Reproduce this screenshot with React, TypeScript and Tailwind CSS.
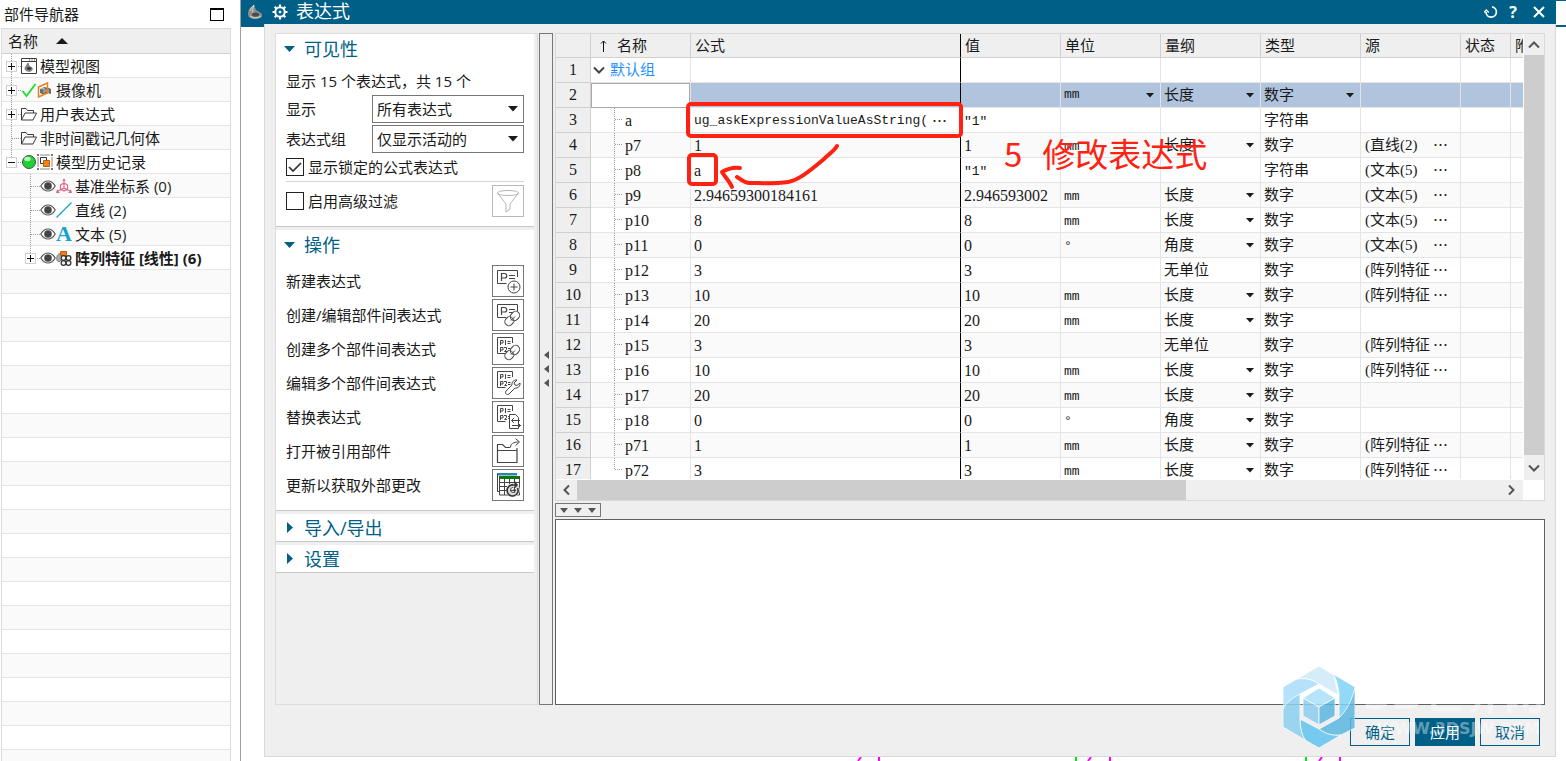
import { useState } from 'react';
import type { ReactNode } from 'react';

interface Expression {
  name: string;
  formula: string;
  value: string;
  unit?: string;
  dimension?: string;
  editable?: boolean;
  type: string;
  source?: string;
}

const expressions: Expression[] = [
  { name: 'a', formula: 'ug_askExpressionValueAsString(', value: '"1"', type: '字符串' },
  { name: 'p7', formula: '1', value: '1', unit: 'mm', dimension: '长度', editable: true, type: '数字', source: '(直线(2)' },
  { name: 'p8', formula: 'a', value: '"1"', type: '字符串', source: '(文本(5)' },
  { name: 'p9', formula: '2.94659300184161', value: '2.946593002', unit: 'mm', dimension: '长度', editable: true, type: '数字', source: '(文本(5)' },
  { name: 'p10', formula: '8', value: '8', unit: 'mm', dimension: '长度', editable: true, type: '数字', source: '(文本(5)' },
  { name: 'p11', formula: '0', value: '0', unit: '°', dimension: '角度', editable: true, type: '数字', source: '(文本(5)' },
  { name: 'p12', formula: '3', value: '3', dimension: '无单位', type: '数字', source: '(阵列特征' },
  { name: 'p13', formula: '10', value: '10', unit: 'mm', dimension: '长度', editable: true, type: '数字', source: '(阵列特征' },
  { name: 'p14', formula: '20', value: '20', unit: 'mm', dimension: '长度', editable: true, type: '数字' },
  { name: 'p15', formula: '3', value: '3', dimension: '无单位', type: '数字', source: '(阵列特征' },
  { name: 'p16', formula: '10', value: '10', unit: 'mm', dimension: '长度', editable: true, type: '数字', source: '(阵列特征' },
  { name: 'p17', formula: '20', value: '20', unit: 'mm', dimension: '长度', editable: true, type: '数字' },
  { name: 'p18', formula: '0', value: '0', unit: '°', dimension: '角度', editable: true, type: '数字' },
  { name: 'p71', formula: '1', value: '1', unit: 'mm', dimension: '长度', editable: true, type: '数字', source: '(阵列特征' },
  { name: 'p72', formula: '3', value: '3', unit: 'mm', dimension: '长度', editable: true, type: '数字', source: '(阵列特征' },
];

/* ---------- icons ---------- */

function PartLogo({ className }: { className: string }) {
  return (
    <svg viewBox="0 0 16 16" className={className}>
      <path d="M1 9C2 4 5 2 7 1l2 5 5 3c2 2 1 4-1 5-4 2-9 1-11-1-1-1-1-3-1-4z" fill="#8d8d8d" />
      <path d="M7 1C6 4 5 7 6 9M3 7c0-2 2-4 4-6" stroke="#d5d5d5" strokeWidth="1" fill="none" />
      <ellipse cx="8.5" cy="10.5" rx="3.6" ry="2" fill="#4c4c4c" />
      <path d="M3 12c3 3 9 2 11 0" stroke="#c4c4c4" strokeWidth="1.2" fill="none" />
    </svg>
  );
}

function ViewsIcon() {
  return (
    <svg viewBox="0 0 16 16" className="h-4 w-4" fill="none" stroke="#3c3c3c">
      <path d="M.5.5h15v15H.5zM.5 3.5h15" />
      <path d="M8 2h1M10.500 2h1M13 2h1" />
      <path d="M4 10l3-5 1 3 3 2c1 2-1 4-4 3-2 0-3-1-3-3z" fill="#8a8a8a" stroke="#777" />
      <ellipse cx="8" cy="10.500" rx="2" ry="1" fill="#333" />
    </svg>
  );
}

function CheckIcon() {
  return (
    <svg viewBox="0 0 16 16" className="h-4 w-4" fill="none">
      <path d="M1.500 9l4 5L14.500 2" stroke="#22dd33" strokeWidth="1.900" />
    </svg>
  );
}

function CameraIcon() {
  return (
    <svg viewBox="0 0 16 16" className="h-4 w-4" fill="none">
      <path d="M3 7l4-2 5 1 2 1v5l-4-1-3 2-4-2z" fill="#6b6b6b" />
      <path d="M4 7l3-1v5M11 7v4" stroke="#c9c9c9" />
      <circle cx="9" cy="8.500" r="1.500" fill="#9a9a9a" />
      <path d="M1.500 5L10.500 1v10l-9 4z" stroke="#e8801e" strokeWidth="1.500" />
    </svg>
  );
}

function FolderIcon() {
  return (
    <svg viewBox="0 0 16 16" className="h-4 w-4" fill="none" stroke="#3c3c3c">
      <path d="M.5 14V2.500h4.500l1.500 2h6v2.500M.5 14L4 7h11.500L12 14z" />
    </svg>
  );
}

function GreenBall() {
  return (
    <svg viewBox="0 0 16 16" className="h-4 w-4">
      <circle cx="8" cy="8" r="6.500" fill="#1fd033" stroke="#3a5a3c" />
      <ellipse cx="6.500" cy="5" rx="3.200" ry="2.200" fill="#b8f7bd" />
    </svg>
  );
}

function HistoryIcon() {
  return (
    <svg viewBox="0 0 16 16" className="h-4 w-4" fill="none" stroke="#6a6a6a">
      <path d="M3 1h10M3 15h10M1 3v10M15 3v10" strokeWidth=".8" />
      <path d="M0 0h2v2H0zM14 0h2v2h-2zM0 14h2v2H0zM14 14h2v2h-2z" fill="#777" stroke="none" />
      <path d="M3.500 3.500h6v6h-6z" fill="#fff" stroke="#333" />
      <path d="M6.500 6.500h6v6h-6z" fill="#ee8413" stroke="#b8600a" />
    </svg>
  );
}

function EyeIcon() {
  return (
    <svg viewBox="0 0 16 16" className="h-4 w-4">
      <path d="M.8 8C3 4.300 5.500 3 8 3s5 1.300 7.200 5C13 11.700 10.500 13 8 13S3 11.700.8 8z" fill="#fff" stroke="#555" strokeWidth="1.200" />
      <circle cx="8" cy="8" r="3.800" fill="#444" />
    </svg>
  );
}

function CsysIcon() {
  return (
    <svg viewBox="0 0 16 16" className="h-4 w-4" fill="none" stroke="#d9668d">
      <path d="M8 2v8M8 10l-6 3M8 10l6 3M4.500 11V7L8 5l3.500 2v4L8 13z" strokeWidth="1.200" />
      <path d="M8 0l1.500 3h-3zM0 15l1-3.500L4 15zM16 15l-1-3.500L12 15z" fill="#d9668d" stroke="none" />
    </svg>
  );
}

function LineIcon() {
  return (
    <svg viewBox="0 0 16 16" className="h-4 w-4">
      <path d="M.5 15.500l15-15" stroke="#12a5c8" strokeWidth="1.200" />
    </svg>
  );
}

function LetterIcon() {
  return <span className="h-4 w-4 text-center font-['Liberation_Serif',serif] text-[22px] leading-4 font-bold text-[#12a5d2]">A</span>;
}

function PatternIcon() {
  return (
    <svg viewBox="0 0 16 16" className="h-4 w-4" fill="none">
      <path d="M1 7c0-3 3-4 5-3v5l-3 3C1 11 0 9 1 7z" fill="#b0b0b0" stroke="#777" />
      <path d="M4.500 1.500h6v4h-6z" fill="#ee7c17" stroke="#c45d09" />
      <g fill="#f2f2f2" stroke="#2f2f2f" strokeWidth="1.200">
        <circle cx="7.500" cy="8" r="2.400" />
        <circle cx="12.500" cy="8" r="2.400" />
        <circle cx="7.500" cy="13" r="2.400" />
        <circle cx="12.500" cy="13" r="2.400" />
      </g>
    </svg>
  );
}

function FunnelIcon() {
  return (
    <svg viewBox="0 0 24 24" className="h-6 w-6" fill="none" stroke="#b4b4b4">
      <path d="M1.500 4c0-1.500 5-2.500 10.500-2.500S22.500 2.500 22.500 4 18 6.500 12 6.500 1.500 5.500 1.500 4zM1.500 4l8.500 11v8l4-3v-5l8.500-11" />
    </svg>
  );
}

function PBoard() {
  return (
    <>
      <path d="M22.500 9V2.500H2.500v13h9" />
      <path d="M6.500 13V5.500h3c3 0 3 4.500 0 4.500h-3M14 7.500h6M14 10.500h6" strokeWidth="1.200" />
    </>
  );
}

function P1P2Board() {
  return (
    <>
      <path d="M17.500 7V1.500H2.500v16h8" />
      <path d="M5.500 9V4.500h2.500v2.500H5.500M10.500 4v5M12.500 5.500h3M12.500 7.500h3M5.500 16v-4.500h2.500v2.500H5.500M9 11.500h2.500v2l-2 2h2.500M13 12.500h2.500M13 14.500h2.500" />
    </>
  );
}

function ChainLinks() {
  return (
    <g fill="#fff">
      <rect x="10.500" y="14" width="8" height="10" rx="4" transform="rotate(42 14.500 19)" />
      <rect x="16" y="9" width="8" height="10" rx="4" transform="rotate(42 20 14)" />
      <path d="M16 18.500l4-4M15 15c2 0 4 2 4 4" fill="none" />
    </g>
  );
}

function ActionSvg({ children }: { children: ReactNode }) {
  return (
    <svg viewBox="0 0 26 26" className="h-[26px] w-[26px]" fill="none" stroke="#454545">
      {children}
    </svg>
  );
}

const actions: { label: string; icon: ReactNode }[] = [
  {
    label: '新建表达式',
    icon: (
      <>
        <PBoard />
        <circle cx="19" cy="19" r="6" fill="#fff" />
        <path d="M15.500 19h7M19 15.500v7" />
      </>
    ),
  },
  { label: '创建/编辑部件间表达式', icon: <><PBoard /><ChainLinks /></> },
  { label: '创建多个部件间表达式', icon: <><P1P2Board /><ChainLinks /></> },
  {
    label: '编辑多个部件间表达式',
    icon: (
      <>
        <P1P2Board />
        <path d="M22 10l-3 3 1 2 2 .5 3-2.500c.5 3-2 5.500-5 5l-6 6c-2 1.500-4.500-.5-3-3l6-6c-.5-3 2-5.500 5-5z" fill="#fff" />
      </>
    ),
  },
  {
    label: '替换表达式',
    icon: (
      <>
        <P1P2Board />
        <path d="M14.500 10.500h6l3 3v11h-9z" fill="#fff" />
        <path d="M25 16.500h-8M19 14l-2.500 2.500L19 19M17 21.500h9M23 19l2.500 2.500L23 24" />
      </>
    ),
  },
  {
    label: '打开被引用部件',
    icon: (
      <>
        <path d="M2.500 12.500h19.500V24.500H2.500zM2.500 12.500v-6h5l3 3h5M22 13V10" strokeWidth="1.200" />
        <path d="M15.500 9c0-3 3-5 8-5M20.500 .5l4 3.500-4 3.500" />
      </>
    ),
  },
  {
    label: '更新以获取外部更改',
    icon: (
      <>
        <path d="M2 1h20v2.500H2z" fill="#2e86ab" stroke="none" />
        <path d="M5 4h20v3H5z" fill="#0a7a0a" stroke="none" />
        <path d="M2.500 2v17.500h2M4.500 4v19h20V4M4.500 10.500h20M4.500 14.500h20M4.500 18.500h20M9.500 7v16M14.500 7v16M19.500 7v16" />
        <circle cx="18" cy="18" r="5" stroke="#dcdcdc" strokeWidth="4" />
        <path d="M22.500 16a5.500 5.500 0 1 1-4-3h3M19 9.500l3 3.500-3 3" strokeWidth="1.600" stroke="#333" />
        <path d="M21 18h-3M20.500 18a2.500 2.500 0 1 1-2.500-2.500" />
      </>
    ),
  },
];

function SmallCaret() {
  return (
    <svg viewBox="0 0 8 5" className="pointer-events-none mr-[6px] h-[5px] w-2 self-center justify-self-end [grid-area:1/1]">
      <path d="M0 0h8L4 4.500z" fill="#1a1a1a" />
    </svg>
  );
}

/* ---------- part navigator ---------- */

interface TreeItem {
  label: string;
  icons: ReactNode;
  level: 0 | 1;
  expander?: '+' | '-';
  last?: boolean;
  bold?: boolean;
}

const treeItems: TreeItem[] = [
  { label: '模型视图', icons: <ViewsIcon />, level: 0, expander: '+' },
  { label: '摄像机', icons: <><CheckIcon /><CameraIcon /></>, level: 0, expander: '+' },
  { label: '用户表达式', icons: <FolderIcon />, level: 0, expander: '+' },
  { label: '非时间戳记几何体', icons: <FolderIcon />, level: 0 },
  { label: '模型历史记录', icons: <><GreenBall /><HistoryIcon /></>, level: 0, expander: '-', last: true },
  { label: '基准坐标系 (0)', icons: <><EyeIcon /><CsysIcon /></>, level: 1 },
  { label: '直线 (2)', icons: <><EyeIcon /><LineIcon /></>, level: 1 },
  { label: '文本 (5)', icons: <><EyeIcon /><LetterIcon /></>, level: 1 },
  { label: '阵列特征 [线性] (6)', icons: <><EyeIcon /><PatternIcon /></>, level: 1, expander: '+', last: true, bold: true },
];

function TreeGuide({ item }: { item: TreeItem }) {
  const x = item.level === 0 ? 9 : 28;
  const width = x + 10;
  return (
    <svg width={width} height="23" viewBox={`0 0 ${width} 23`} className="shrink-0" fill="none">
      <g stroke="#9b9b9b" strokeDasharray="1 1">
        <path d={`M${x + 0.5} 0v${item.last ? 12 : 23}`} />
        <path d={`M${x + 1} 12.500h9`} />
      </g>
      {item.expander && (
        <>
          <rect x={x - 4.5} y="7.500" width="10" height="10" fill="#fff" stroke="#d0d0d0" />
          <path d={`M${x - 3} 12.500h7`} stroke="#111" />
          {item.expander === '+' && <path d={`M${x + 0.5} 9v7`} stroke="#111" />}
        </>
      )}
    </svg>
  );
}

function PartNavigator() {
  return (
    <aside className="flex w-60 shrink-0 flex-col overflow-hidden bg-white">
      <div className="flex h-7 shrink-0 items-center justify-between pr-4 pl-1">
        <h1 className="text-[15px]">部件导航器</h1>
        <button aria-label="最大化" className="h-[13px] w-[14px] border border-t-2 border-black" />
      </div>
      <div className="mr-[9px] ml-px flex-1 overflow-hidden border-x border-t border-[#dcdcdc]">
        <button className="flex h-[25px] w-full items-center gap-[18px] border-b border-[#d0d0d0] bg-[#efefef] pl-[6px]">
          名称
          <svg viewBox="0 0 12 6" className="h-[6px] w-3">
            <path d="M6 0l6 6H0z" fill="#1a1a1a" />
          </svg>
        </button>
        <ul>
          {treeItems.map((item) => (
            <li key={item.label} className="flex h-6 items-center border-b border-[#e6e6e6] even:bg-[#fafafa]">
              <TreeGuide item={item} />
              <span className="flex shrink-0">{item.icons}</span>
              <span className={item.bold ? 'ml-[3px] font-bold whitespace-nowrap' : 'ml-[3px] whitespace-nowrap'}>{item.label}</span>
            </li>
          ))}
          {Array.from({ length: 21 }, (_, i) => (
            <li key={i} className="h-6 border-b border-[#e6e6e6] even:bg-[#fafafa]" />
          ))}
        </ul>
      </div>
    </aside>
  );
}

/* ---------- left options panel ---------- */

function SectionHeading({ title, open, onToggle }: { title: string; open: boolean; onToggle: () => void }) {
  return (
    <button
      onClick={onToggle}
      className={`flex w-full items-center text-lg leading-6 text-[#005f87] ${open ? 'h-[30px]' : 'h-[27px]'}`}
    >
      <svg viewBox="0 0 12 12" className="mr-2 -ml-[2px] h-3 w-3">
        <path d={open ? 'M0 3h11L5.500 9z' : 'M3 0v11l6-5.500z'} fill="#005f87" />
      </svg>
      {title}
    </button>
  );
}

function Section({ title, defaultOpen = false, children }: { title: string; defaultOpen?: boolean; children?: ReactNode }) {
  const [open, setOpen] = useState(defaultOpen);
  return (
    <section className="border-b border-[#c8c8c8] bg-white px-[10px]">
      <SectionHeading title={title} open={open} onToggle={() => setOpen(!open)} />
      {open && children}
    </section>
  );
}

function LabeledSelect({ id, label, options }: { id: string; label: string; options: string[] }) {
  return (
    <div className="flex h-7 items-center justify-between">
      <label htmlFor={id}>{label}</label>
      <div className="grid h-7 w-[152px]">
        <select id={id} className="appearance-none border border-[#777] bg-white pl-1 outline-none [grid-area:1/1]">
          {options.map((o) => (
            <option key={o}>{o}</option>
          ))}
        </select>
        <svg viewBox="0 0 10 6" className="pointer-events-none mr-[6px] h-[6px] w-[10px] self-center justify-self-end [grid-area:1/1]">
          <path d="M0 0h10L5 5.500z" fill="#1a1a1a" />
        </svg>
      </div>
    </div>
  );
}

function CheckOption({ label, defaultChecked }: { label: string; defaultChecked?: boolean }) {
  return (
    <label className="flex items-center gap-1">
      <span className="grid h-[18px] w-[18px]">
        <input type="checkbox" defaultChecked={defaultChecked} className="peer appearance-none border border-[#222] bg-white [grid-area:1/1]" />
        <svg viewBox="0 0 18 18" className="invisible [grid-area:1/1] peer-checked:visible" fill="none">
          <path d="M3 9l4 4 8-8" stroke="#333" strokeWidth="1.700" />
        </svg>
      </span>
      {label}
    </label>
  );
}

function OptionsPanel() {
  return (
    <div className="flex w-[263px] shrink-0 flex-col gap-[3px] border border-[#dcdcdc] pr-[3px]">
      <Section title="可见性" defaultOpen>
        <p lang="zh-CN" className="h-[31px] pt-[6px] leading-[22px]">{'显示 15 个表达式\uff0c共 15 个'}</p>
        <div className="flex flex-col gap-[2px]">
          <LabeledSelect id="show" label="显示" options={['所有表达式', '用户定义的表达式']} />
          <LabeledSelect id="group" label="表达式组" options={['仅显示活动的', '显示所有']} />
        </div>
        <div className="flex h-[29px] items-center border-b border-[#d4d4d4]">
          <CheckOption label="显示锁定的公式表达式" defaultChecked />
        </div>
        <div className="mb-[6px] flex h-[38px] items-center justify-between">
          <CheckOption label="启用高级过滤" />
          <button aria-label="高级过滤" className="grid h-8 w-8 place-items-center border border-[#b9b9b9]">
            <FunnelIcon />
          </button>
        </div>
      </Section>
      <Section title="操作" defaultOpen>
        <ul className="pt-1 pb-2">
          {actions.map((action) => (
            <li key={action.label} className="flex h-[34px] items-center justify-between">
              {action.label}
              <button aria-label={action.label} className="grid h-8 w-8 place-items-center border border-[#777]">
                <ActionSvg>{action.icon}</ActionSvg>
              </button>
            </li>
          ))}
        </ul>
      </Section>
      <Section title="导入/导出" />
      <Section title="设置" />
    </div>
  );
}

/* ---------- expression table ---------- */

const cell = 'h-[25px] border-r border-b border-[#e4e4e4] p-0 pl-[3px]';
const unitCell =
  "h-[25px] border-r border-b border-[#e4e4e4] p-0 pt-[3px] pl-[3px] font-['Liberation_Mono','Noto_Sans_CJK_SC',monospace] text-[13px]";
const headCell = 'h-6 border-r border-b border-[#d0d0d0] p-0 pl-1 text-left font-normal';
const mono = "font-['Liberation_Mono','Noto_Sans_CJK_SC',monospace] text-[13px]";

function CellSelect({ label, value }: { label: string; value: string }) {
  return (
    <div className="grid h-6">
      <select aria-label={label} className="w-full appearance-none bg-transparent outline-none [grid-area:1/1]">
        <option>{value}</option>
      </select>
      <SmallCaret />
    </div>
  );
}

function RowNumber({ n }: { n: number }) {
  return (
    <th scope="row" className="h-[25px] border-r border-b border-[#d0d0d0] bg-[#efefef] p-0 text-center text-base leading-5 font-normal">
      {n}
    </th>
  );
}

function CellText({ text }: { text: string }) {
  const isWord = /["_]/.test(text);
  return <span className={isWord ? mono : 'text-base leading-5'}>{text}</span>;
}

function ExpressionRow({ n, item, last }: { n: number; item: Expression; last: boolean }) {
  return (
    <tr className={n % 2 === 0 ? 'bg-[#fafafa]' : 'bg-white'}>
      <RowNumber n={n} />
      <td className="h-[25px] border-r border-b border-[#e4e4e4] p-0">
        <div className="flex h-6 items-center text-base leading-5">
          <svg viewBox="0 0 34 24" className="h-6 w-[34px]" stroke="#9b9b9b" strokeDasharray="1 1" fill="none">
            <path d={last ? 'M23.500 0v12' : 'M23.500 0v24'} />
            <path d="M24 11.500h7" />
          </svg>
          <span className="pt-[2px]">{item.name}</span>
        </div>
      </td>
      <td className="h-[25px] border-r border-b border-r-black border-b-[#e4e4e4] p-0 pl-[3px]">
        <div className="flex items-center pt-[2px] whitespace-nowrap">
          <CellText text={item.formula} />
          {item.formula.endsWith('(') && (
            <span lang="zh-CN" className="pl-1 font-['Noto_Sans_CJK_SC',sans-serif] leading-5">
              …
            </span>
          )}
        </div>
      </td>
      <td className={cell}>
        <div className="pt-[2px]">
          <CellText text={item.value} />
        </div>
      </td>
      <td className={unitCell}>{item.unit}</td>
      <td className={cell}>
        {item.editable && item.dimension ? <CellSelect label={`${item.name} 量纲`} value={item.dimension} /> : item.dimension}
      </td>
      <td className={cell}>{item.type}</td>
      <td className={cell}>
        {item.source && (
          <div className="flex items-center justify-between pr-3 pl-px whitespace-nowrap">
            <span>{item.source}</span>
            <button aria-label="更多" lang="zh-CN" className="font-['Noto_Sans_CJK_SC',sans-serif] leading-5">
              …
            </button>
          </div>
        )}
      </td>
      <td className={cell} />
      <td className="border-b border-[#e4e4e4] p-0" />
    </tr>
  );
}

function ExpressionTable() {
  return (
    <table className="w-full table-fixed border-separate border-spacing-0 bg-white font-['Liberation_Serif','Noto_Sans_CJK_SC',serif] text-[15px] leading-5 text-[#1a1a1a]">
      <colgroup>
        <col className="w-[35px]" />
        <col className="w-[100px]" />
        <col className="w-[270px]" />
        <col className="w-[100px]" />
        <col className="w-[100px]" />
        <col className="w-[100px]" />
        <col className="w-[100px]" />
        <col className="w-[100px]" />
        <col className="w-[50px]" />
        <col />
      </colgroup>
      <thead className="bg-[#efefef]">
        <tr>
          <th className={headCell} aria-label="行" />
          <th className={headCell}>
            <div className="flex items-center gap-[10px] pl-1">
              <svg viewBox="0 0 8 12" className="h-3 w-2" fill="none" stroke="#111">
                <path d="M4.500 12V1M2 3.500l2.500-2.500L7 3.500" />
              </svg>
              名称
            </div>
          </th>
          <th className="h-6 border-r border-b border-r-black border-b-[#d0d0d0] p-0 pl-1 text-left font-normal">公式</th>
          <th className={headCell}>值</th>
          <th className={headCell}>单位</th>
          <th className={headCell}>量纲</th>
          <th className={headCell}>类型</th>
          <th className={headCell}>源</th>
          <th className={headCell}>状态</th>
          <th className="overflow-hidden border-b border-[#d0d0d0] p-0 pl-1 text-left font-normal whitespace-nowrap">附注</th>
        </tr>
      </thead>
      <tbody>
        <tr>
          <RowNumber n={1} />
          <td className="h-[25px] border-r border-b border-[#e4e4e4] p-0">
            <button className="flex items-center gap-[5px] pl-[2px] text-[#1e90ff]">
              <svg viewBox="0 0 12 8" className="h-2 w-3" fill="none" stroke="#444" strokeWidth="2">
                <path d="M1 1.500l5 5 5-5" />
              </svg>
              默认组
            </button>
          </td>
          <td className="border-r border-b border-r-black border-b-[#e4e4e4]" />
          <td className={cell} />
          <td className={cell} />
          <td className={cell} />
          <td className={cell} />
          <td className={cell} />
          <td className={cell} />
          <td className="border-b border-[#e4e4e4]" />
        </tr>
        <tr className="bg-[#b0c4de]">
          <RowNumber n={2} />
          <td className="h-[25px] border-r border-[#e4e4e4] p-0">
            <input aria-label="名称" className="block h-[25px] w-full border border-[#a9a9a9] bg-white px-1 outline-none" />
          </td>
          <td className="border-r border-b border-r-black border-b-[#e4e4e4] p-0">
            <input aria-label="公式" className="block h-6 w-full bg-transparent px-1 outline-none" />
          </td>
          <td className={cell} />
          <td className={`${cell} ${mono}`}>
            <CellSelect label="单位" value="mm" />
          </td>
          <td className={cell}>
            <CellSelect label="量纲" value="长度" />
          </td>
          <td className={cell}>
            <CellSelect label="类型" value="数字" />
          </td>
          <td className={cell} />
          <td className={cell} />
          <td className="border-b border-[#e4e4e4]" />
        </tr>
        {expressions.map((item, i) => (
          <ExpressionRow key={item.name} n={i + 3} item={item} last={i === expressions.length - 1} />
        ))}
      </tbody>
    </table>
  );
}

function Chevron({ d }: { d: string }) {
  return (
    <svg viewBox="0 0 12 12" className="h-3 w-3" fill="none" stroke="#555" strokeWidth="2">
      <path d={d} />
    </svg>
  );
}

function Markup() {
  return (
    <>
      <svg viewBox="0 0 540 110" className="pointer-events-none absolute top-[65px] left-[127px] h-[110px] w-[540px]" fill="none" stroke="#ff2212" strokeLinecap="round" strokeLinejoin="round">
        <rect x="5" y="5" width="273" height="32" rx="3" strokeWidth="4" />
        <rect x="6" y="56" width="27" height="29" rx="3" strokeWidth="4" />
        <path d="M154 47c-3 5-9 9-13 13l-6 5c-11 9-20 16-30 18-14 2-28 1-39 1-6-1-7-3-12-6" strokeWidth="4" />
        <path d="M57 69c-7-1-13 1-18 4 3 5 8 10 10 15" strokeWidth="4" />
      </svg>
      <p className="pointer-events-none absolute top-[99px] left-[448px] flex gap-5 font-['Noto_Sans_CJK_SC',sans-serif] text-[33px] leading-10 whitespace-nowrap text-[#ff2212]">
        <span>5</span>
        <span>修改表达式</span>
      </p>
    </>
  );
}

function TablePane() {
  return (
    <div className="relative grid min-h-0 flex-1 grid-cols-[1fr_21px] grid-rows-[1fr_20px] border border-[#d9d9d9] bg-white">
      <div className="overflow-hidden border-b border-white">
        <ExpressionTable />
      </div>
      <div className="ml-px flex min-h-0 flex-col items-center bg-[#efefef]">
        <button aria-label="向上" className="grid h-[21px] place-items-center">
          <Chevron d="M1 8.500l5-5 5 5" />
        </button>
        <div className="w-full flex-1 bg-[#cdcdcd]" />
        <button aria-label="向下" className="grid h-[25px] place-items-center">
          <Chevron d="M1 3.500l5 5 5-5" />
        </button>
      </div>
      <div className="flex bg-[#efefef]">
        <button aria-label="向左" className="grid w-[21px] place-items-center">
          <Chevron d="M8 1.500L3.500 6 8 10.500" />
        </button>
        <div className="flex-1">
          <div className="h-full w-[66%] bg-[#cdcdcd]" />
        </div>
        <button aria-label="向右" className="grid w-6 place-items-center">
          <Chevron d="M4 1.500L8.500 6 4 10.500" />
        </button>
      </div>
      <Markup />
    </div>
  );
}

/* ---------- dialog ---------- */

function TitleBar() {
  return (
    <header className="flex h-6 shrink-0 items-center bg-[#005f87] text-white">
      <PartLogo className="ml-[6px] h-4 w-4" />
      <svg viewBox="0 0 16 16" className="ml-[9px] h-4 w-4" fill="none" stroke="#fff">
        <circle cx="8" cy="8" r="4.700" strokeWidth="2" />
        <circle cx="8" cy="8" r="1" fill="#fff" />
        <path d="M8 .5v3M8 12.500v3M.5 8h3M12.500 8h3M2.700 2.700l2 2M11.300 11.300l2 2M2.700 13.300l2-2M11.300 4.700l2-2" strokeWidth="2.200" />
      </svg>
      <h2 className="ml-2 flex-1 pb-[3px] text-lg leading-[22px]">表达式</h2>
      <button aria-label="重置" className="mr-[10px]">
        <svg viewBox="0 0 14 14" className="h-[14px] w-[14px]" fill="none" stroke="#fff" strokeWidth="1.700">
          <path d="M8 1.800a5.200 5.200 0 1 1-6 5.200" />
          <path d="M0 7.500L2.200 5l2.600 2.500" strokeWidth="1.300" />
        </svg>
      </button>
      <button aria-label="帮助" className="mr-[15px] w-[10px] text-base leading-5 font-bold">
        ?
      </button>
      <button aria-label="关闭" className="mr-[11px]">
        <svg viewBox="0 0 12 12" className="h-3 w-3" fill="none" stroke="#fff" strokeWidth="2">
          <path d="M1 1l10 10M11 1L1 11" />
        </svg>
      </button>
      <div className="mt-px w-[10px] self-stretch bg-white" />
    </header>
  );
}

function Splitter() {
  return (
    <div className="ml-px flex w-[14px] shrink-0 flex-col items-center justify-center gap-[6px] border border-[#777]">
      {[0, 1, 2].map((i) => (
        <svg key={i} viewBox="0 0 5 8" className="h-2 w-[5px]">
          <path d="M5 0v8L0 4z" fill="#555" />
        </svg>
      ))}
    </div>
  );
}

function Watermark() {
  return (
    <div className="pointer-events-none absolute right-[11px] bottom-[8px] flex items-center">
      <svg viewBox="0 0 72 82" className="h-[82px] w-[72px]" stroke="#fff" strokeOpacity=".8" opacity=".85">
        <path d="M14 13L36 0l15 9 4 20-19-11C29 13 22 12 14 13z" fill="#cdeaf9" />
        <path d="M50 8l22 13v26L56 56V28C55 20 54 14 50 8z" fill="#7fd2f6" />
        <path d="M72 45v17L58 69c-10 1-16-1-22-6l20-11c8-8 12-16 16-30z" fill="#5cb8e2" />
        <path d="M17 53l19 10c7 5 14 7 22 6L36 82 22 74c-4-6-5-13-5-21z" fill="#62c4f0" />
        <path d="M0 37C4 29 10 25 17 25v28c0 9 2 15 5 21L0 61z" fill="#8dd0ef" />
        <path d="M0 21l14-8c8-1 15 0 22 5L17 28C9 32 4 36 0 43z" fill="#a9defa" />
        <path d="M36 22l16 10-16 9-16-9z" fill="#a9e0fb" />
        <path d="M20 32l16 9v18l-16-9z" fill="#8dcfee" />
        <path d="M52 32l-16 9v18l16-9z" fill="#5cb8e2" />
      </svg>
      <div className="ml-2 flex flex-col gap-1 font-['DejaVu_Sans','Noto_Sans_CJK_SC',sans-serif] font-bold whitespace-nowrap text-white/40">
        <div className="text-[40px] leading-10">3D世界网</div>
        <div className="pl-[14px] text-base leading-5">WWW.3DSJW.COM</div>
      </div>
    </div>
  );
}

function DialogFooter() {
  const base = 'h-7 w-[60px] border border-[#005f87]';
  return (
    <div className="flex justify-end gap-[5px] pt-[13px] pr-[5px] pb-[10px]">
      <button className={`${base} text-[#005f87]`}>确定</button>
      <button className={`${base} bg-[#005f87] text-white`}>应用</button>
      <button className={`${base} text-[#005f87]`}>取消</button>
    </div>
  );
}

function CanvasStrip() {
  return (
    <svg className="h-1 w-full shrink-0 bg-white" fill="none" strokeWidth="2">
      <path d="M617 4l3-4M847 4l3-4M1078 4l3-4M638 0v4M869 0v4M1099 0v4" stroke="#ff00ff" />
      <path d="M835 0v4M1065 0v4" stroke="#00ee00" />
    </svg>
  );
}

export default function App() {
  return (
    <div className="flex h-screen min-h-[600px] overflow-hidden bg-white font-['Open_Sans','Noto_Sans_CJK_SC',sans-serif] text-[15px] leading-[22px] text-[#1a1a1a]">
      <PartNavigator />
      <div className="flex min-w-0 flex-1 flex-col border-l border-[#a0a0a0]">
        <TitleBar />
        <div className="flex min-h-0 flex-1">
          <div className="w-[23px] shrink-0 border-t-[3px] border-[#005f87]" />
          <main className="relative flex min-w-0 flex-1 flex-col border-x border-b border-[#d9d9d9] bg-[#efefef] px-[10px] pt-[9px]">
            <div className="flex min-h-0 flex-1">
              <OptionsPanel />
              <Splitter />
              <div className="ml-[2px] flex min-w-0 flex-1 flex-col gap-[2px]">
                <TablePane />
                <button aria-label="折叠" className="flex h-[14px] w-[46px] items-center justify-center gap-[6px] border border-[#777]">
                  {[0, 1, 2].map((i) => (
                    <svg key={i} viewBox="0 0 8 5" className="h-[5px] w-2">
                      <path d="M0 0h8L4 5z" fill="#555" />
                    </svg>
                  ))}
                </button>
                <textarea aria-label="消息" className="h-[186px] shrink-0 resize-none border border-[#606060] bg-white outline-none" />
              </div>
            </div>
            <DialogFooter />
            <Watermark />
          </main>
          <div className="mt-px w-[10px] shrink-0 border-t-2 border-[#005f87]" />
        </div>
        <CanvasStrip />
      </div>
    </div>
  );
}
